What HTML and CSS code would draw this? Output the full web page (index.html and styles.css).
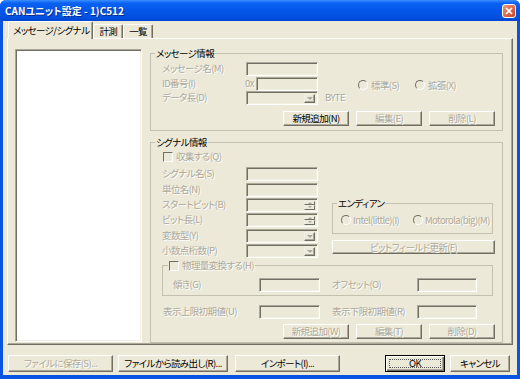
FILE: index.html
```html
<!DOCTYPE html>
<html lang="ja">
<head>
  <meta charset="UTF-8" />
  <title>CANユニット設定</title>
  <link rel="stylesheet" href="styles.css">
</head>
<body>
<div class="window">
  <div class="titlebar">
    <span class="title">CANユニット設定 - 1)C512</span>
    <span class="close">
      <svg width="14" height="14" viewBox="0 0 14 14">
        <defs>
          <linearGradient id="cg" x1="0" y1="0" x2="1" y2="1">
            <stop offset="0" stop-color="#F09A7E"/>
            <stop offset="1" stop-color="#C4401C"/>
          </linearGradient>
        </defs>
        <rect x="0.5" y="0.5" width="13" height="13" rx="2.5" fill="url(#cg)" stroke="#fff"/>
        <path d="M4 4 L10 10 M10 4 L4 10" stroke="#fff" stroke-width="1.6"/>
      </svg>
    </span>
  </div>

  <div class="client">
    <div class="tabs">
      <div class="tab active">メッセージ/シグナル</div>
      <div class="tab">計測</div>
      <div class="tab">一覧</div>
    </div>

    <div class="panel">
      <div class="listbox"></div>

      <div class="groups">
        <!-- メッセージ情報 -->
        <fieldset class="group msg">
          <legend>メッセージ情報</legend>
          <div class="msg-top">
            <div class="fields">
              <div class="row">
                <span class="lbl dis w84">メッセージ名(M)</span>
                <span class="edit w72"></span>
              </div>
              <div class="row">
                <span class="lbl dis w83">ID番号(I)</span>
                <span class="lbl dis w11">0x</span>
                <span class="edit w62"></span>
              </div>
              <div class="row">
                <span class="lbl dis w84">データ長(D)</span>
                <span class="edit combo w72"><span class="drop"></span></span>
                <span class="lbl dis unit">BYTE</span>
              </div>
            </div>
            <div class="radios">
              <span class="radio"><i></i><span class="dis">標準(S)</span></span>
              <span class="radio"><i></i><span class="dis">拡張(X)</span></span>
            </div>
          </div>
          <div class="btnrow">
            <span class="btn">新規追加(N)</span>
            <span class="btn dis">編集(E)</span>
            <span class="btn dis">削除(L)</span>
          </div>
        </fieldset>

        <!-- シグナル情報 -->
        <fieldset class="group sig">
          <legend>シグナル情報</legend>
          <div class="sig-top">
            <div class="sig-left">
              <div class="cbrow"><i class="check"></i><span class="dis">収集する(Q)</span></div>
              <div class="row r-s">
                <span class="lbl dis w84">シグナル名(S)</span>
                <span class="edit w72"></span>
              </div>
              <div class="row r-n">
                <span class="lbl dis w84">単位名(N)</span>
                <span class="edit w72"></span>
              </div>
              <div class="row r-b">
                <span class="lbl dis w84">スタートビット(B)</span>
                <span class="edit spin w72"><span class="spinbox"><b class="up"></b><b class="down"></b></span></span>
              </div>
              <div class="row r-l">
                <span class="lbl dis w84">ビット長(L)</span>
                <span class="edit spin w72"><span class="spinbox"><b class="up"></b><b class="down"></b></span></span>
              </div>
              <div class="row r-y">
                <span class="lbl dis w84">変数型(Y)</span>
                <span class="edit combo w72"><span class="drop"></span></span>
              </div>
              <div class="row r-p">
                <span class="lbl dis w84">小数点桁数(P)</span>
                <span class="edit combo w72"><span class="drop"></span></span>
              </div>
            </div>
            <div class="sig-right">
              <fieldset class="group endian">
                <legend>エンディアン</legend>
                <div class="radios endian-radios">
                  <span class="radio"><i></i><span class="dis">Intel(little)(I)</span></span>
                  <span class="radio"><i></i><span class="dis">Motorola(big)(M)</span></span>
                </div>
              </fieldset>
              <span class="btn dis wide">ビットフィールド更新(F)</span>
            </div>
          </div>

          <fieldset class="group phys">
            <legend><i class="check"></i><span class="dis">物理量変換する(H)</span></legend>
            <div class="row pair">
              <span class="lbl dis w86">傾き(G)</span>
              <span class="edit w61"></span>
              <span class="lbl dis w85 gap12">オフセット(O)</span>
              <span class="edit w60"></span>
            </div>
          </fieldset>

          <div class="row pair limits">
            <span class="lbl dis w96">表示上限初期値(U)</span>
            <span class="edit w61"></span>
            <span class="lbl dis w85 gap12">表示下限初期値(R)</span>
            <span class="edit w60"></span>
          </div>

          <div class="btnrow sigbtns">
            <span class="btn dis">新規追加(W)</span>
            <span class="btn dis">編集(T)</span>
            <span class="btn dis">削除(D)</span>
          </div>
        </fieldset>
      </div>
    </div>

    <div class="footer">
      <span class="btn dis f1">ファイルに保存(S)...</span>
      <span class="btn f2">ファイルから読み出し(R)...</span>
      <span class="btn f3">インポート(I)...</span>
      <span class="btn default f4"><span class="focus">OK</span></span>
      <span class="btn f5">キャンセル</span>
    </div>
  </div>
</div>
</body>
</html>
```

FILE: styles.css
```css
* { box-sizing: border-box; }
body {
  margin: 0;
  width: 520px; height: 379px;
  overflow: hidden;
  font-family: "Noto Sans CJK JP", "Liberation Sans", sans-serif;
  font-size: 9.5px;
  letter-spacing: -0.6px;
  font-feature-settings: "palt";
  line-height: 13px;
  background: #fff;
}
.window {
  width: 520px; height: 379px;
  background: #0A54E4;
  border-radius: 6px 6px 0 0;
  display: flex;
  flex-direction: column;
  overflow: hidden;
}
.titlebar {
  height: 21px;
  display: flex;
  align-items: center;
  justify-content: space-between;
  padding: 0 4px 0 5px;
  background: linear-gradient(#3C8EFF, #0B63F2 3px, #0456EA 10px, #0151E2 17px, #0046D2);
  color: #fff;
  font-weight: bold;
  font-size: 10px;
  letter-spacing: 0;
  text-shadow: 1px 1px #0B2A8C;
}
.close { display: flex; }

.client {
  flex: 1;
  margin: 0 3px 4px;
  background: #ECE9D8;
  padding: 0 4px;
  display: flex;
  flex-direction: column;
}

/* tabs */
.tabs {
  height: 17px;
  display: flex;
  align-items: flex-end;
  padding-left: 1px;
}
.tab {
  height: 14px;
  padding: 0 5px;
  border: 1px solid;
  border-color: #fff #716F64 transparent #fff;
  border-bottom: none;
  border-radius: 2px 2px 0 0;
  box-shadow: inset -1px 0 #ACA899;
  display: flex;
  align-items: center;
}
.tab.active {
  height: 18px;
  margin-bottom: -1px;
  padding: 0 3px 0 4px;
  background: #ECE9D8;
  position: relative;
  z-index: 1;
}

.panel {
  height: 307px;
  border: 1px solid;
  border-color: #fff #716F64 #716F64 #fff;
  box-shadow: inset -1px -1px #ACA899;
  display: flex;
  padding: 8px 0 0 7px;
}
.listbox {
  width: 127px;
  height: 293px;
  margin-top: 2px;
  background: #fff;
  border: 1px solid;
  border-color: #ACA899 #fff #fff #ACA899;
  box-shadow: inset 1px 1px #716F64, inset -1px -1px #F1EFE2;
}
.groups {
  margin-left: 8px;
  width: 353px;
  display: flex;
  flex-direction: column;
}

/* group boxes */
.group {
  margin: 0;
  padding: 0;
  min-width: 0;
  border: 1px solid #C3C0B0;
}
.group legend {
  padding: 0 1px;
  margin-left: 4px;
  line-height: 13px;
  display: flex;
  align-items: center;
}
.msg { height: 84px; }
.sig { height: 207px; margin-top: 5px; }

.dis {
  color: #ACA899;
  text-shadow: 1px 1px #fff;
}
.row {
  display: flex;
  align-items: center;
  height: 15px;
}
.lbl { white-space: nowrap; flex: none; }
.w11 { width: 11px; }
.w83 { width: 83px; }
.w84 { width: 84px; }
.w85 { width: 85px; }
.w86 { width: 86px; }
.w96 { width: 96px; }
.w60 { width: 60px; }
.w61 { width: 61px; }
.w62 { width: 62px; }
.w72 { width: 72px; }
.gap12 { margin-left: 12px; }
.unit { margin-left: 7px; }

.edit {
  height: 14px;
  flex: none;
  background: #ECE9D8;
  border: 1px solid;
  border-color: #ACA899 #fff #fff #ACA899;
  box-shadow: inset 1px 1px #716F64, inset -1px -1px #F1EFE2;
  display: flex;
  justify-content: flex-end;
  padding: 2px 2px 1px 2px;
}
.drop {
  width: 11px;
  border: 1px solid;
  border-color: #F1EFE2 #716F64 #716F64 #F1EFE2;
  box-shadow: inset -1px -1px #ACA899;
  display: flex;
  align-items: center;
  justify-content: center;
}
.drop::after {
  content: "";
  border-left: 3px solid transparent;
  border-right: 3px solid transparent;
  border-top: 3px solid #ACA899;
}
.spinbox {
  width: 11px;
  display: flex;
  flex-direction: column;
}
.spinbox b {
  flex: 1;
  border: 1px solid;
  border-color: #F1EFE2 #716F64 #716F64 #F1EFE2;
  display: flex;
  align-items: center;
  justify-content: center;
}
.spinbox .up::after {
  content: "";
  border-left: 2px solid transparent;
  border-right: 2px solid transparent;
  border-bottom: 2px solid #ACA899;
}
.spinbox .down::after {
  content: "";
  border-left: 2px solid transparent;
  border-right: 2px solid transparent;
  border-top: 2px solid #ACA899;
}

/* message group */
.msg-top {
  display: flex;
  padding: 1px 0 0 11px;
}
.fields { width: 196px; }
.fields .row:nth-child(3) { margin-top: -1px; }
.radios {
  display: flex;
  margin-top: 18px;
  height: 12px;
}
.radio {
  display: flex;
  align-items: center;
  white-space: nowrap;
}
.radio i {
  width: 10px; height: 10px;
  margin-right: 3px;
  border-radius: 50%;
  border: 1px solid;
  border-color: #716F64 #fff #fff #716F64;
  background: #ECE9D8;
  flex: none;
}
.msg .radio { width: 57px; }

.btnrow {
  display: flex;
  gap: 7px;
  justify-content: flex-end;
  padding-right: 7px;
  margin-top: 6px;
}
.btn {
  height: 15px;
  width: 66px;
  flex: none;
  background: #ECE9D8;
  border: 1px solid;
  border-color: #fff #716F64 #716F64 #fff;
  box-shadow: inset -1px -1px #ACA899;
  display: flex;
  align-items: center;
  justify-content: center;
  white-space: nowrap;
}

/* signal group */
.sig-top { display: flex; }
.sig-left {
  width: 181px;
  padding-left: 11px;
}
.cbrow {
  display: flex;
  align-items: center;
  height: 13px;
  margin-top: 1px;
  padding-left: 1px;
}
.check {
  width: 10px; height: 10px;
  margin-right: 3px;
  border: 1px solid;
  border-color: #716F64 #fff #fff #716F64;
  background: #ECE9D8;
  flex: none;
}
.r-s { margin-top: 3px; }
.r-n { margin-top: 1px; }
.r-y { margin-top: 1px; }

.sig-right {
  padding-top: 48px;
  display: flex;
  flex-direction: column;
}
.endian {
  width: 161px;
  height: 37px;
}
.endian-radios {
  margin-top: 4px;
  padding-left: 8px;
}
.endian .radio i { margin-right: 2px; }
.endian .radio:first-child { width: 72px; }
.btn.wide {
  width: 163px;
  height: 14px;
  margin-top: 6px;
}

.phys {
  margin: 1px 9px 0 11px;
  height: 37px;
}
.phys legend { margin-left: 5px; }
.pair { padding-left: 10px; }
.phys .pair { margin-top: 5px; }
.limits {
  margin-top: 8px;
  padding-left: 12px;
}
.sigbtns { margin-top: 5px; }

/* footer */
.footer {
  display: flex;
  padding-top: 10px;
}
.footer .btn { height: 17px; }
.f1 { width: 105px; margin-left: 1px; }
.f2 { width: 110px; margin-left: 5px; }
.f3 { width: 105px; margin-left: 7px; }
.f4 { width: 60px; margin-left: 45px; }
.f5 { width: 60px; margin-left: 5px; }
.btn.default {
  border-color: #000;
  box-shadow: inset 1px 1px #fff, inset -1px -1px #716F64, inset -2px -2px #ACA899;
  padding: 3px;
}
.focus {
  width: 100%; height: 100%;
  border: 1px dotted #555;
  display: flex;
  align-items: center;
  justify-content: center;
}
```
